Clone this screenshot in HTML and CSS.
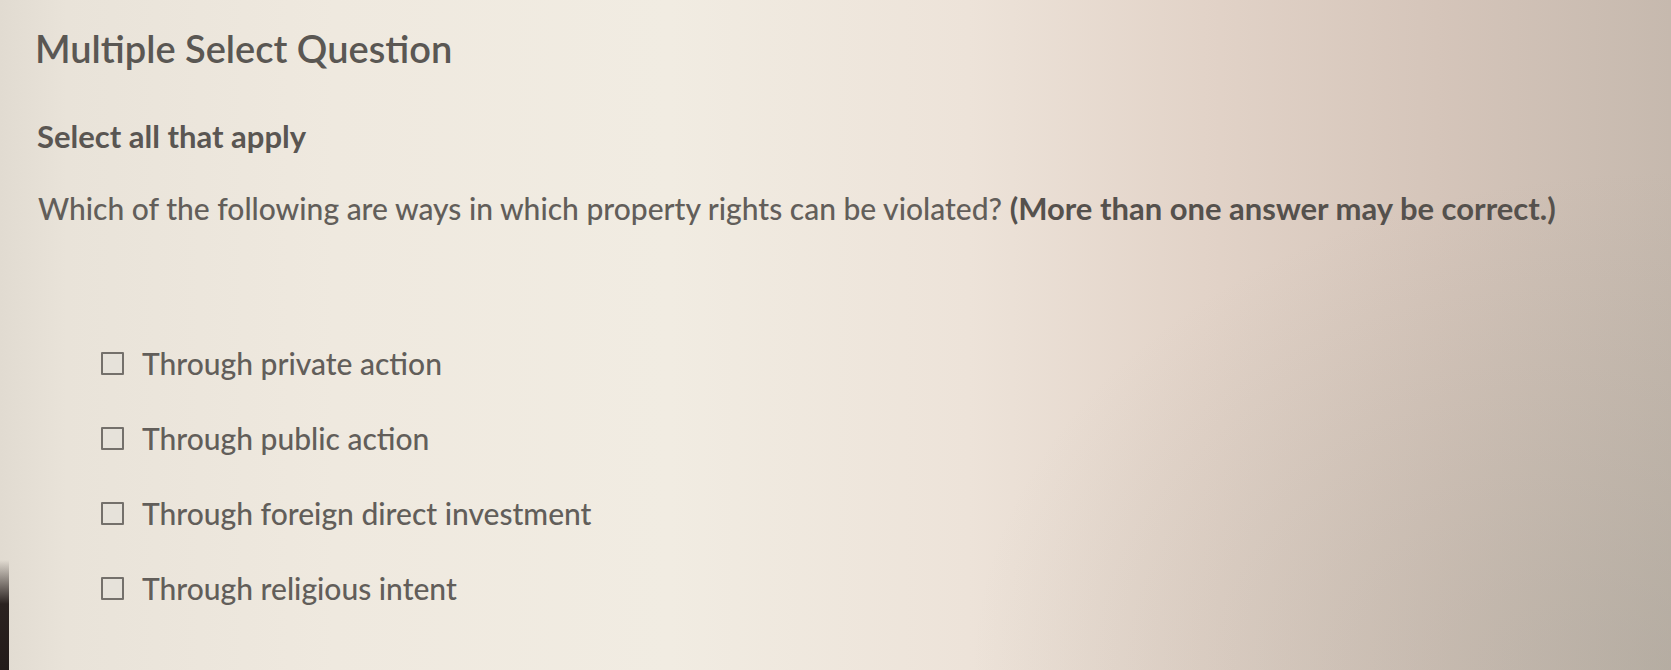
FILE: index.html
```html
<!DOCTYPE html>
<html lang="en">
<head>
<meta charset="utf-8">
<title>Multiple Select Question</title>
<link rel="stylesheet" href="styles.css">
</head>
<body>
<div class="screen">
  <div class="bezel"></div>
  <main class="question">
    <h1 class="q-type">Multiple Select Question</h1>
    <p class="q-instr">Select all that apply</p>
    <p class="q-prompt">Which of the following are ways in which property rights can be violated? <strong>(More than one answer may be correct.)</strong></p>
    <ul class="choices">
      <li class="choice"><span class="box"></span><span class="label">Through private action</span></li>
      <li class="choice"><span class="box"></span><span class="label">Through public action</span></li>
      <li class="choice"><span class="box"></span><span class="label">Through foreign direct investment</span></li>
      <li class="choice"><span class="box"></span><span class="label">Through religious intent</span></li>
    </ul>
  </main>
</div>
</body>
</html>
```
FILE: styles.css
```css
html, body {
  margin: 0;
  padding: 0;
  width: 1671px;
  height: 670px;
  overflow: hidden;
}
body {
  font-family: Lato, "Open Sans", "Liberation Sans", sans-serif;
  color: #5a5652;
}
.screen {
  position: relative;
  width: 1671px;
  height: 670px;
  background:
    radial-gradient(ellipse 700px 500px at 1671px 670px, rgba(150,150,140,0.35), rgba(150,150,140,0) 100%),
    linear-gradient(to right, #e1dbd1 0%, #e9e3d9 4%, #efe9df 20%, #f1ece2 40%, #ede3d9 58%, #e2d3c8 72%, #d5c5ba 86%, #c6b9ae 100%);
  display: flex;
}
.bezel {
  position: absolute;
  left: 0;
  top: 560px;
  width: 9px;
  height: 110px;
  background: linear-gradient(to bottom, rgba(40,30,28,0), #2b2220 40%, #231b19 100%);
}
.question {
  padding: 26px 0 0 35px;
}
.q-type {
  margin: 0;
  font-size: 38px;
  font-weight: 600;
  line-height: 44px;
  color: #5a5753;
}
.q-instr {
  margin: 49px 0 0 2px;
  font-size: 31px;
  font-weight: 700;
  line-height: 34px;
  color: #5a5652;
}
.q-prompt {
  margin: 38px 0 0 3px;
  font-size: 30px;
  font-weight: 500;
  line-height: 34px;
  color: #625e5a;
}
.q-prompt strong {
  font-size: 31px;
  font-weight: 700;
  color: #55514d;
}
.choices {
  list-style: none;
  margin: 121px 0 0 0;
  padding: 0 0 0 66px;
  display: flex;
  flex-direction: column;
  gap: 41px;
}
.choice {
  display: flex;
  align-items: center;
  gap: 18px;
  height: 34px;
}
.box {
  width: 19px;
  height: 19px;
  border: 2.5px solid #74706b;
  border-radius: 1px;
  background: #e6e2da;
  flex: none;
}
.label {
  font-size: 30px;
  font-weight: 500;
  line-height: 34px;
  color: #625e5a;
}
```
